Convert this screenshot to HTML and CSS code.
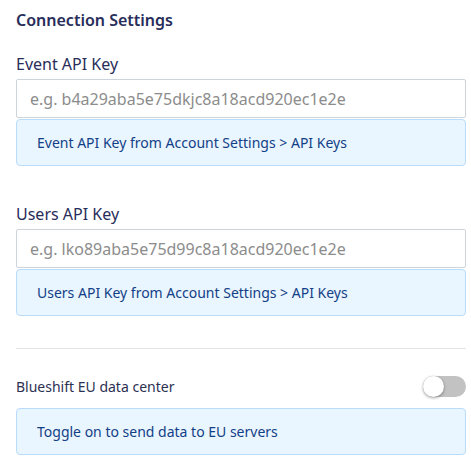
FILE: index.html
```html
<!DOCTYPE html>
<html>
<head>
<meta charset="utf-8">
<link rel="stylesheet" href="styles.css">
</head>
<body>
<div class="panel">
  <h2 class="title">Connection Settings</h2>

  <div class="field field-first">
    <label class="label">Event API Key</label>
    <input class="input" type="text" placeholder="e.g. b4a29aba5e75dkjc8a18acd920ec1e2e">
    <div class="info">Event API Key from Account Settings &gt; API Keys</div>
  </div>

  <div class="field field-second">
    <label class="label">Users API Key</label>
    <input class="input" type="text" placeholder="e.g. lko89aba5e75d99c8a18acd920ec1e2e">
    <div class="info">Users API Key from Account Settings &gt; API Keys</div>
  </div>

  <hr class="divider">

  <div class="toggle-row">
    <span class="toggle-label">Blueshift EU data center</span>
    <span class="switch"><span class="knob"></span></span>
  </div>
  <div class="info info-eu">Toggle on to send data to EU servers</div>
</div>
</body>
</html>
```

FILE: styles.css
```css
html, body {
  margin: 0;
  padding: 0;
  background: #ffffff;
}
body {
  font-family: "Noto Sans", "Open Sans", sans-serif;
  color: #2c3152;
}
.panel {
  display: flex;
  flex-direction: column;
  padding: 8px 5px 0 16px;
}
.title {
  margin: 0;
  font-size: 16px;
  font-weight: 600;
  line-height: 24px;
  color: #282d5a;
}
.field {
  display: flex;
  flex-direction: column;
}
.field-first {
  margin-top: 20px;
}
.field-second {
  margin-top: 36px;
}
.label {
  font-size: 16px;
  line-height: 24px;
  color: #282d5a;
  margin-bottom: 3px;
}
.input {
  box-sizing: border-box;
  height: 39px;
  margin: 0;
  padding: 0 13px;
  border: 1px solid #cdd4dc;
  border-radius: 2px;
  font-family: "Noto Sans", "Open Sans", sans-serif;
  font-size: 16px;
  color: #333;
  outline: none;
}
.input::placeholder {
  color: #8c8c8c;
}
.info {
  box-sizing: border-box;
  margin-top: 1px;
  padding: 13px 20px;
  background: #e9f5ff;
  border: 1px solid #b9dcfa;
  border-radius: 4px;
  font-size: 14px;
  line-height: 19px;
  color: #123f86;
}
.divider {
  margin: 32px 0 0 0;
  border: 0;
  border-top: 1px solid #e2e4e8;
  height: 0;
}
.toggle-row {
  display: flex;
  align-items: center;
  justify-content: space-between;
  margin-top: 25px;
  height: 24px;
}
.toggle-label {
  font-size: 14px;
  color: #2c3152;
}
.switch {
  position: relative;
  display: block;
  width: 43px;
  height: 21px;
  border-radius: 11px;
  background: #c2c2c2;
}
.knob {
  position: absolute;
  left: 0;
  top: 0;
  width: 21px;
  height: 21px;
  border-radius: 50%;
  background: #ffffff;
  box-shadow: 0 1px 3px rgba(0, 0, 0, 0.4);
}
.info-eu {
  margin-top: 10px;
}
```
